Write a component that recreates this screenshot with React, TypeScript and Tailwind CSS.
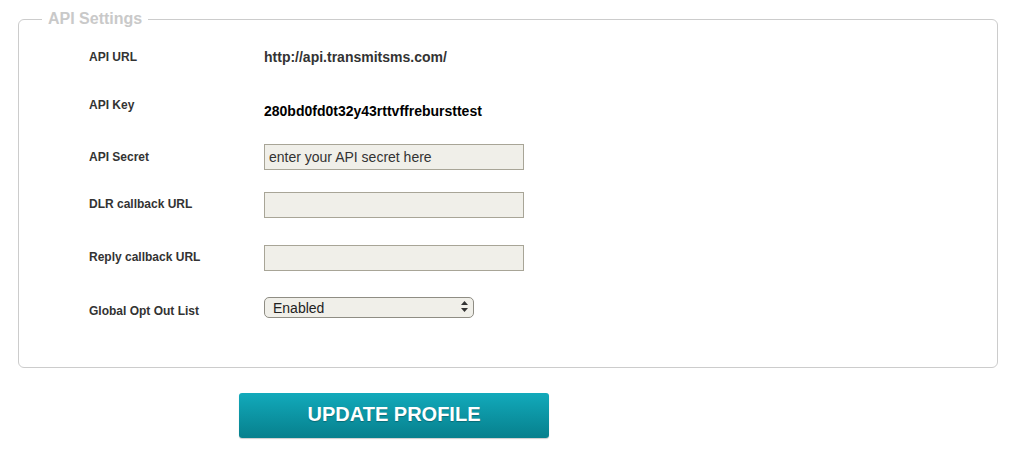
export default function App() {
  const font = { fontFamily: '"Liberation Sans", Arial, sans-serif' };

  return (
    <main className="min-h-screen bg-white pt-[10px] pl-[18px] pr-[21px]" style={font}>
      <fieldset className="border border-[#cccccc] rounded-[6px] pl-[23px] pr-4 pt-0 pb-[44px] m-0">
        <legend className="px-[6px] text-[16px] leading-[18px] font-bold text-[#c9c9c9]">
          API Settings
        </legend>

        <div className="pl-[47px]">
          <div className="mt-[16px] flex items-center h-[26px]">
            <div className="w-[175px] text-[12px] font-bold text-[#333]">API URL</div>
            <div className="text-[14px] font-bold text-[#333]">http://api.transmitsms.com/</div>
          </div>

          <div className="mt-[21px] flex items-center h-[26px]">
            <div className="w-[175px] text-[12px] font-bold text-[#333] mt-[2px]">API Key</div>
            <div className="text-[14px] font-bold text-black mt-[15px]">280bd0fd0t32y43rttvffrebursttest</div>
          </div>

          <div className="mt-[27px] flex items-center h-[26px]">
            <div className="w-[175px] text-[12px] font-bold text-[#333]">API Secret</div>
            <input
              type="text"
              defaultValue="enter your API secret here"
              className="w-[260px] h-[26px] bg-[#f0efe9] border border-[#a8a597] px-[4px] text-[14px] text-[#333] outline-none"
            />
          </div>

          <div className="mt-[21px] flex items-center h-[26px]">
            <div className="w-[175px] text-[12px] font-bold text-[#333]">DLR callback URL</div>
            <input
              type="text"
              className="w-[260px] h-[26px] bg-[#f0efe9] border border-[#a8a597] px-[4px] text-[14px] outline-none mt-[2px]"
            />
          </div>

          <div className="mt-[27px] flex items-center h-[26px]">
            <div className="w-[175px] text-[12px] font-bold text-[#333]">Reply callback URL</div>
            <input
              type="text"
              className="w-[260px] h-[26px] bg-[#f0efe9] border border-[#a8a597] px-[4px] text-[14px] outline-none mt-[2px]"
            />
          </div>

          <div className="mt-[27px] flex items-center h-[26px]">
            <div className="w-[175px] text-[12px] font-bold text-[#333] mt-[2px]">Global Opt Out List</div>
            <div className="relative w-[210px] h-[21px] mb-[8px]">
              <select
                defaultValue="Enabled"
                className="appearance-none w-full h-full bg-[#f0efe9] border border-[#8f8d84] rounded-[5px] pl-[8px] text-[14px] leading-[18px] text-[#222] outline-none"
              >
                <option>Enabled</option>
                <option>Disabled</option>
              </select>
              <svg className="absolute right-[6px] top-[5px] pointer-events-none" width="7" height="11" viewBox="0 0 7 11">
                <path d="M3.5 0 L7 4 L0 4 Z" fill="#333" />
                <path d="M0 7 L7 7 L3.5 11 Z" fill="#333" />
              </svg>
            </div>
          </div>
        </div>
      </fieldset>

      <button
        type="button"
        className="mt-[25px] ml-[221px] w-[310px] h-[45px] pb-[3px] rounded-[3px] bg-gradient-to-b from-[#12aabb] to-[#07808d] text-white text-[20px] font-bold [text-shadow:0_1px_1px_rgba(0,0,0,0.25)] shadow-[0_1px_1px_rgba(0,0,0,0.2)]"
      >
        UPDATE PROFILE
      </button>
    </main>
  );
}
